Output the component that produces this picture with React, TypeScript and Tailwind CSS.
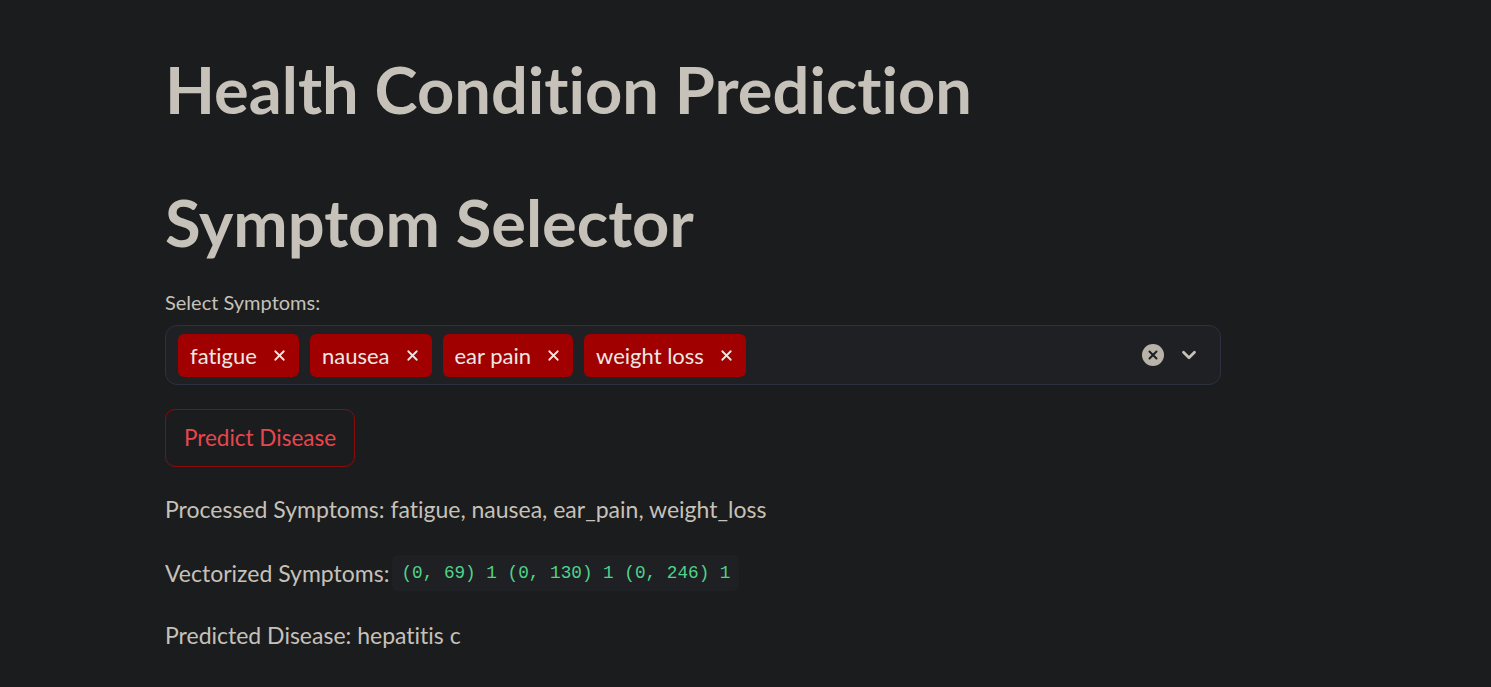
import { X, ChevronDown } from "lucide-react"

const symptoms = ["fatigue", "nausea", "ear pain", "weight loss"]

export default function App() {
  return (
    <div className="min-h-screen w-full bg-[#1b1c1e] text-[#c6c1b9] font-['Lato','Noto_Sans',sans-serif] [font-variant-ligatures:none]">
      <div className="w-[1056px] ml-[165px] pt-[45px]">
        <h1 className="text-[65px] font-bold leading-[88px] text-[#c6c1b9]">Health Condition Prediction</h1>
        <h1 className="mt-[45px] text-[65px] font-bold leading-[88px] text-[#c6c1b9]">Symptom Selector</h1>

        {/* multiselect */}
        <label className="mt-[23px] block text-[20px] leading-[26px] text-[#c6c1b9]">Select Symptoms:</label>
        <div className="mt-[10px] flex h-[60px] items-center rounded-[12px] border border-[#2b3140] bg-[#1f2023] pl-[12px] pr-[20px]">
          <div className="flex flex-1 items-center gap-[11px]">
            {symptoms.map((s) => (
              <span
                key={s}
                className="flex h-[43px] items-center gap-[14px] rounded-[6px] bg-[#a00000] pl-[12px] pr-[11px] text-[22px] text-[#ece8e2]"
              >
                {s}
                <X size={17} strokeWidth={2.5} />
              </span>
            ))}
          </div>
          <div className="flex items-center gap-[14px]">
            <span className="flex h-[22px] w-[22px] items-center justify-center rounded-full bg-[#b8b2a8]">
              <X size={14} strokeWidth={3.5} className="text-[#1f2023]" />
            </span>
            <ChevronDown size={22} strokeWidth={3} className="text-[#c6c1b9]" />
          </div>
        </div>

        <button className="mt-[24px] flex h-[58px] w-[190px] items-center justify-center rounded-[10px] border border-[#8b0b0b] text-[22.5px] text-[#e8464e]">
          Predict Disease
        </button>

        <p className="mt-[26px] text-[23px] leading-[32px]">Processed Symptoms: fatigue, nausea, ear_pain, weight_loss</p>
        <p className="mt-[30px] flex items-center text-[23px] leading-[32px]">
          Vectorized Symptoms:
          <code className="ml-[3px] rounded-[6px] bg-[#1f2023] px-[9px] py-[2px] font-['Liberation_Mono',monospace] text-[17.7px] text-[#4fd38a]">
            (0, 69) 1 (0, 130) 1 (0, 246) 1
          </code>
        </p>
        <p className="mt-[28px] text-[23px] leading-[32px]">Predicted Disease: hepatitis c</p>
      </div>
    </div>
  )
}
